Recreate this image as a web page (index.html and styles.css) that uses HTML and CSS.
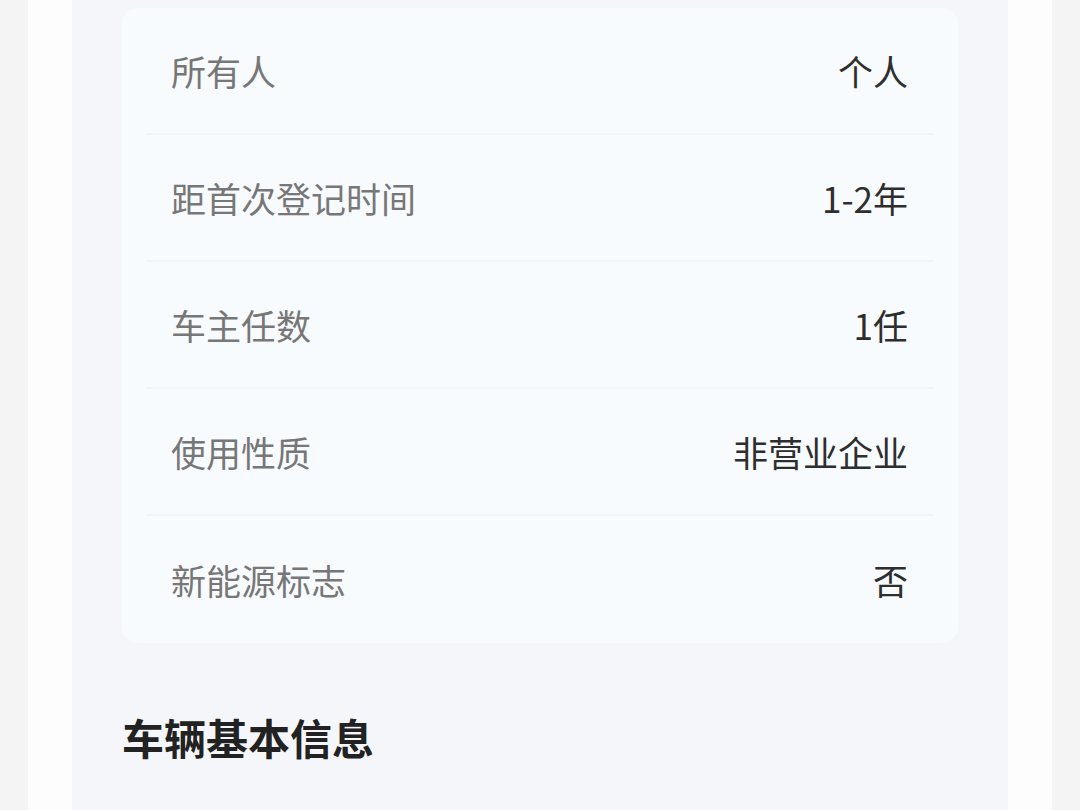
FILE: index.html
```html
<!DOCTYPE html>
<html lang="zh">
<head>
<meta charset="utf-8">
<link rel="stylesheet" href="styles.css">
</head>
<body>
<div class="page">
  <div class="panel">
    <div class="card">
      <div class="row"><span class="label">所有人</span><span class="value">个人</span></div>
      <div class="row"><span class="label">距首次登记时间</span><span class="value">1-2年</span></div>
      <div class="row"><span class="label">车主任数</span><span class="value">1任</span></div>
      <div class="row"><span class="label">使用性质</span><span class="value">非营业企业</span></div>
      <div class="row last"><span class="label">新能源标志</span><span class="value">否</span></div>
    </div>
    <h2 class="title">车辆基本信息</h2>
  </div>
</div>
</body>
</html>
```
FILE: styles.css
```css
html, body {
  margin: 0;
  padding: 0;
  height: 100%;
}
body {
  background: #f4f4f5;
  font-family: "Noto Sans CJK SC", "Noto Sans", sans-serif;
  overflow: hidden;
}
.page {
  margin: 0 28px;
  padding: 0 44px;
  background: #fdfdfe;
  height: 810px;
  box-sizing: border-box;
}
.panel {
  background: #f5f6fa;
  height: 810px;
  padding-top: 8px;
  box-sizing: border-box;
}
.card {
  margin: 0 50px;
  background: #f8fbfd;
  border-radius: 16px;
  padding: 0 24px;
}
.row {
  display: flex;
  justify-content: space-between;
  align-items: center;
  height: 125px;
  border-bottom: 2px solid #f2f5f7;
  padding: 0 26px 0 25px;
}
.row.last {
  border-bottom: none;
  height: 127px;
}
.label {
  font-size: 35px;
  color: #777777;
}
.value {
  font-size: 35px;
  color: #2e2e2e;
}
.title {
  margin: 0;
  padding: 64px 0 0 50px;
  font-size: 42px;
  font-weight: 700;
  color: #222222;
  line-height: 60px;
}
```
